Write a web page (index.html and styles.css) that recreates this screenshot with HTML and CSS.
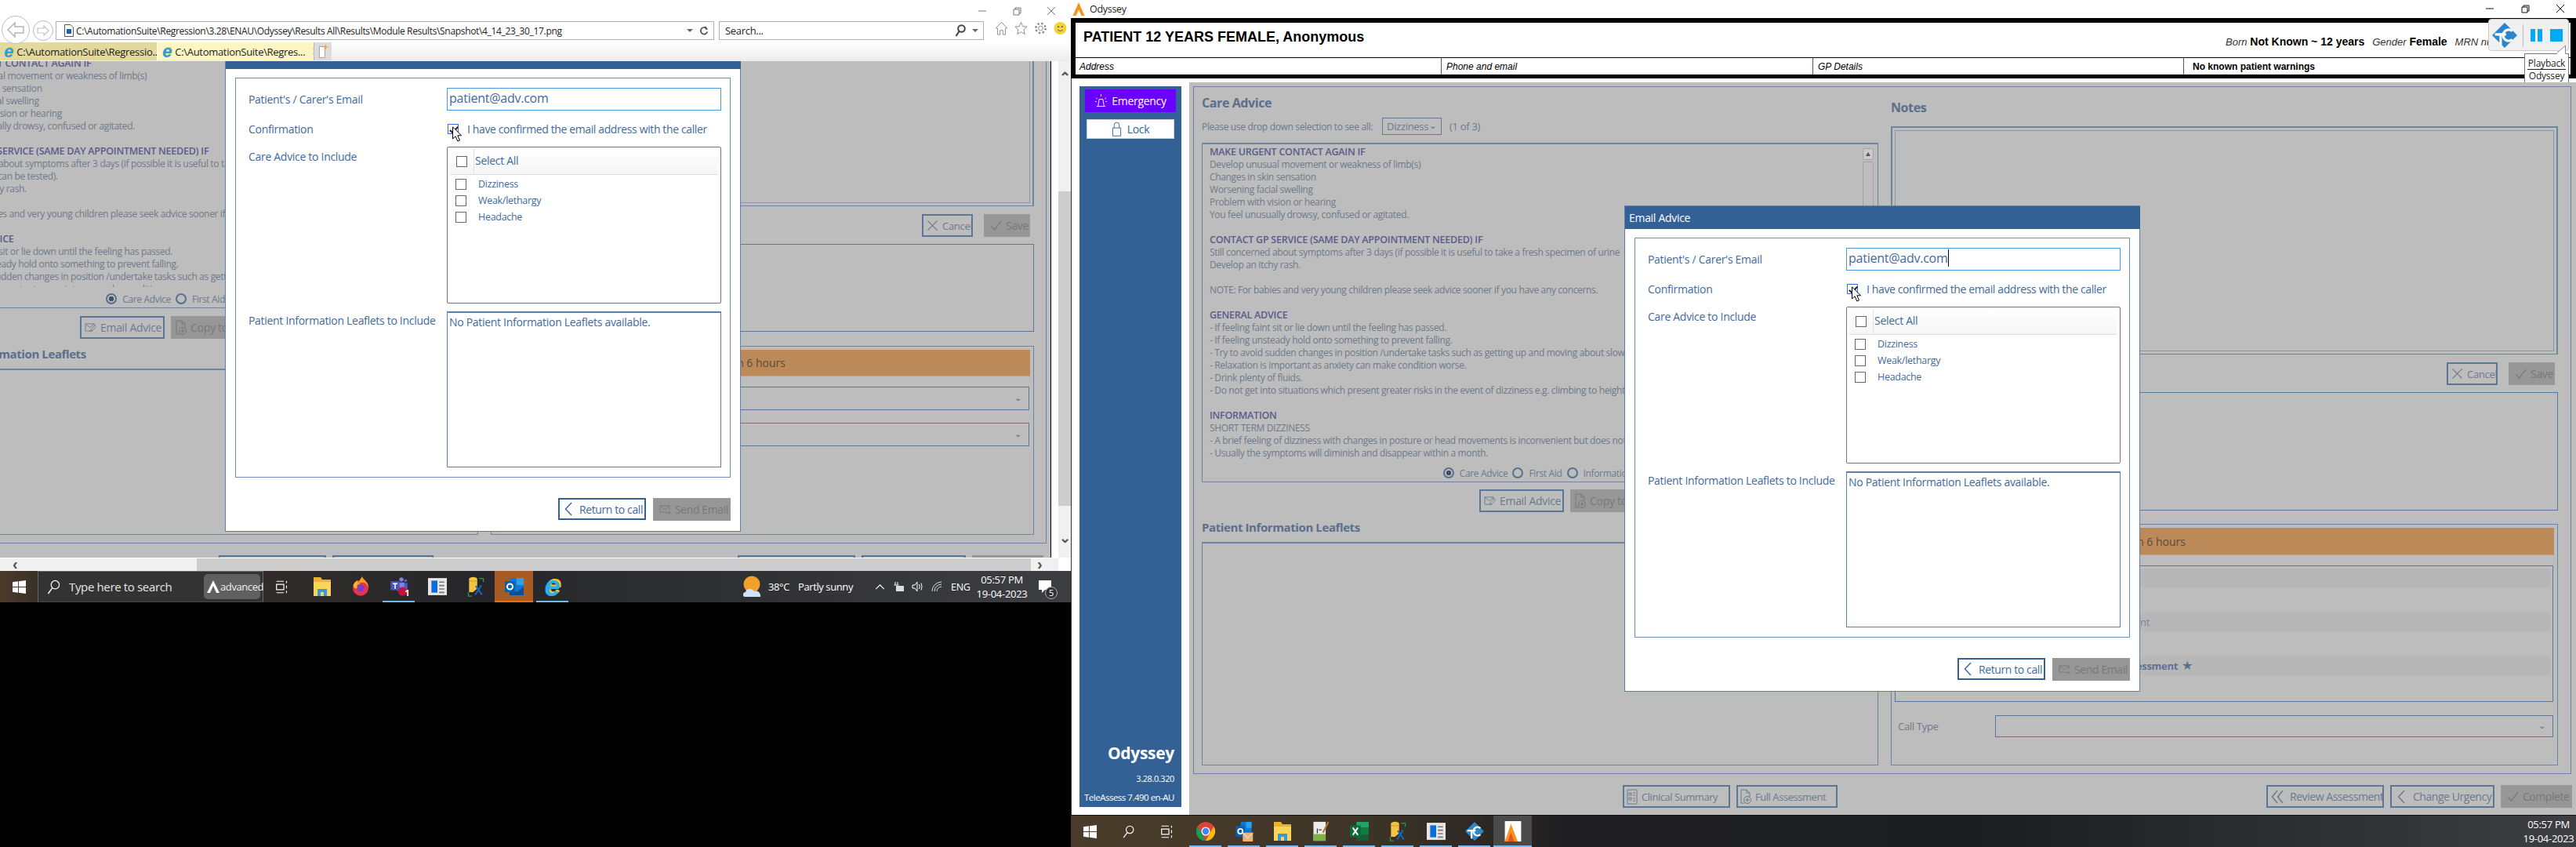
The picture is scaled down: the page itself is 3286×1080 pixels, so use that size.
FILE: index.html
```html
<!DOCTYPE html>
<html lang="en">
<head>
<meta charset="utf-8">
<title>Odyssey</title>
<link rel="stylesheet" href="styles.css">
</head>
<body>
<svg class="defs" xmlns="http://www.w3.org/2000/svg">
  <symbol id="i-win" viewBox="0 0 18 18"><path fill="#fff" d="M0 2.5 7.5 1.4V8.5H0zM8.5 1.3 18 0V8.500H8.500zM0 9.500H7.500V16.600L0 15.500zM8.500 9.500H18V18L8.500 16.700z"/></symbol>
  <symbol id="i-glass" viewBox="0 0 18 20"><circle cx="11" cy="7" r="5.500" fill="none" stroke="#fff" stroke-width="1.300"/><path d="M7 11.500 1.500 19" stroke="#fff" stroke-width="1.500"/></symbol>
  <symbol id="i-view" viewBox="0 0 18 20"><path fill="none" stroke="#fff" stroke-width="1.400" d="M1 1.500H12M1 18.500H12M1 6H12V14H1zM16 1V4M16 7.500V12M16 15.500V19"/></symbol>
  <symbol id="i-folder" viewBox="0 0 24 26"><path fill="#eeb32d" d="M1 1H10L12 4H23V25H1z"/><path fill="#fbd45a" d="M1 7H23V25H1z"/><path fill="#3a96dd" d="M6 16H18V25H14V20H10V25H6z"/></symbol>
  <symbol id="i-fox" viewBox="0 0 24 30"><circle cx="12" cy="17" r="11.500" fill="#e5344f"/><path fill="#ff9a1f" d="M14 0C17 6 24 8 23.500 17 22 12 19 9 15 9 12 9 9 10 8 12 8 7 12 5 14 0z"/><circle cx="12" cy="17" r="5.500" fill="#7b3fc4"/><path fill="#ffb224" d="M1 13C3 8 6 6 8 6 7 9 9 10 12 11 8 11 6 13 7 17 4 19 2 17 1 13z"/></symbol>
  <symbol id="i-teams" viewBox="0 0 28 34"><circle cx="18" cy="5" r="3.500" fill="#7b83eb"/><circle cx="25" cy="7" r="2.500" fill="#5059c9"/><path fill="#7b83eb" d="M11 10H23V24H11z"/><path fill="#5059c9" d="M23 11H28V22H23z"/><path fill="#4b53bc" d="M0 8H15V23H0z"/><path fill="#fff" d="M3.500 11H11.500V13H8.500V20.500H6.500V13H3.500z"/><circle cx="20" cy="25" r="7.500" fill="#c4123a"/></symbol>
  <symbol id="i-bar" viewBox="0 0 22 22"><path fill="#e6e6e6" d="M0 1H22V21H0z"/><path fill="#0a6cd6" d="M4 4H11V18H4z"/><path fill="#777" d="M13 5H19V6.500H13zM13 9H19V10.500H13zM13 13H19V14.500H13zM13 17H19V18.500H13z"/></symbol>
  <symbol id="i-paint" viewBox="0 0 24 30"><path fill="#f4c542" d="M2 4C2 0 14 0 14 4V18L8 23H2z"/><path fill="#d9a21f" d="M2 4C2 7 14 7 14 4V6C14 8 2 8 2 6z"/><path fill="none" stroke="#2b9a3f" stroke-width="1.500" d="M17 3H23V8M1 23V29H6"/><path stroke="#0f6cc4" stroke-width="2.200" d="M11 27 20 13M12 14 21 27"/></symbol>
  <symbol id="i-out" viewBox="0 0 24 26"><path fill="#0f78d4" d="M6 2H24V20H6z"/><path fill="#2da2ea" d="M15 2H24V11H15z"/><path fill="#0a4f99" d="M6 13 15 20 24 13V24H6z"/><path fill="#0c5fae" d="M0 6H13V20H0z"/><circle cx="6.500" cy="13" r="3.500" fill="none" stroke="#fff" stroke-width="2"/></symbol>
  <symbol id="i-chrome" viewBox="0 0 24 24"><circle cx="12" cy="12" r="12" fill="#db4437"/><path fill="#0f9d58" d="M12 24A12 12 0 0 1 1.600 6L7 15l5 9z"/><path fill="#fbbc05" d="M12 24 18 13 22.400 6A12 12 0 0 1 12 24z"/><circle cx="12" cy="12" r="5.500" fill="#fff"/><circle cx="12" cy="12" r="4.200" fill="#4285f4"/></symbol>
  <symbol id="i-outm" viewBox="0 0 26 30"><path fill="#0f78d4" d="M8 1H24V20H8z"/><path fill="#2da2ea" d="M16 1H24V10H16z"/><path fill="#0c5fae" d="M1 7H14V23H1z"/><circle cx="7.500" cy="15" r="3.500" fill="none" stroke="#fff" stroke-width="2"/><path fill="#e8b27a" d="M11 17H26V30H11z"/><path fill="none" stroke="#fff" d="M11 17 18.500 25 26 17"/></symbol>
  <symbol id="i-note" viewBox="0 0 24 30"><path fill="#ededed" d="M1 1H19V29H1z"/><path fill="#7cb342" d="M1 19H19V29H1z"/><path fill="#333" d="M6 11H7.500V18H6zM9 12H13V13.500H9z"/><path stroke="#b5792e" stroke-width="2.500" d="M23 1 15 17"/></symbol>
  <symbol id="i-xl" viewBox="0 0 26 28"><path fill="#21a366" d="M9 1H26V9H9z"/><path fill="#107c41" d="M9 9H26V19H9z"/><path fill="#185c37" d="M9 19H26V27H9z"/><path fill="#0e6b38" d="M0 6H15V22H0z"/><path stroke="#fff" stroke-width="2" d="M4 9 11 19M11 9 4 19"/></symbol>
  <symbol id="i-tc" viewBox="0 0 36 36"><path fill="#2b87c9" d="M18 0 36 18 18 36 0 18z"/><path fill="#fff" d="M4 15H20V18.500H14V32H10.500V18.500H4z"/><path fill="none" stroke="#fff" stroke-width="3.500" d="M29 12A8 8 0 1 0 29 24"/></symbol>
  <symbol id="i-ody" viewBox="0 0 24 30"><path fill="#fff" d="M0 0H24V30H0z"/><path fill="#f7941d" d="M9 4 19 30H14L9 16 4 30H0z"/><path fill="#e8541c" d="M9 16 14 30H4z"/></symbol>
  <symbol id="i-check" viewBox="0 0 16 16"><path fill="none" stroke="currentColor" stroke-width="1.300" d="M1.500 9 6 14 15 2"/></symbol>
  <symbol id="i-x" viewBox="0 0 16 16"><path fill="none" stroke="currentColor" stroke-width="1.300" d="M1.500 1.500 14.500 14.500M14.500 1.500 1.500 14.500"/></symbol>
  <symbol id="i-prev" viewBox="0 0 10 18"><path fill="none" stroke="currentColor" stroke-width="1.500" d="M9 1 1.500 9 9 17"/></symbol>
  <symbol id="i-prev2" viewBox="0 0 16 18"><path fill="none" stroke="currentColor" stroke-width="1.500" d="M8 1 1.500 9 8 17M15 1 8.500 9 15 17"/></symbol>
  <symbol id="i-mail" viewBox="0 0 16 14"><path fill="none" stroke="currentColor" d="M11 11H1V2H14V7M1 2 7.500 7.500 14 2M10 11.500H15M13 9.500 15 11.500 13 13.500"/></symbol>
  <symbol id="i-mailp" viewBox="0 0 16 14"><path fill="none" stroke="currentColor" d="M11 12H1V2H13V5M1 2 7 7 13 2M8 12 9 9 14 4 16 6 11 11z"/></symbol>
  <symbol id="i-doc" viewBox="0 0 14 20"><path fill="none" stroke="currentColor" d="M1 1H8L12 5V10M1 1V18H5M8 1V5H12"/><circle cx="9" cy="14" r="4.500" fill="none" stroke="currentColor"/><path stroke="currentColor" d="M9 11.500V16.500M6.500 14H11.500"/></symbol>
  <symbol id="i-list" viewBox="0 0 14 20"><path fill="none" stroke="currentColor" d="M1 1H13V19H1zM3 5H6V8H3zM3 11H6V14H3zM8 5H11M8 8H11M8 12H11M8 15H11"/></symbol>
  <symbol id="i-cur" viewBox="0 0 13 20"><path fill="#fff" stroke="#000" d="M.500.800V16L4 12.800 6.800 19 9.500 17.900 6.800 11.800H11.500z"/></symbol>
</svg>

<div class="desktop">
  <section class="ie">
    <div class="ie-top">
      <div class="ie-ctrl">
        <svg class="wc" viewBox="0 0 12 12"><path d="M1 6H11" stroke="#777"/></svg>
        <svg class="wc" viewBox="0 0 12 12"><path fill="none" stroke="#777" d="M2 4H9V11H2zM4 4V2H11V9H9"/></svg>
        <svg class="wc" viewBox="0 0 12 12"><path stroke="#777" d="M1 1 11 11M11 1 1 11"/></svg>
      </div>
      <div class="ie-nav">
        <svg class="nav-back" viewBox="0 0 38 36"><circle cx="19" cy="18" r="17.500" fill="#fff" stroke="#bbb"/><path fill="none" stroke="#b5b5b5" stroke-width="1.500" d="M18 9 9 18 18 27V22H29V14H18z"/></svg>
        <svg class="nav-fwd" viewBox="0 0 26 26"><circle cx="13" cy="13" r="12.500" fill="#fff" stroke="#bbb"/><path fill="none" stroke="#c4c4c4" stroke-width="1.200" d="M14 7 20 13 14 19V16H6V10H14z"/></svg>
        <div class="addr">
          <svg class="addr-ic" viewBox="0 0 12 16"><path fill="#fff" stroke="#555" d="M.500.500H8L11.500 4V15.500H.500z"/><path fill="#1560b0" d="M3 6H9V12H3z"/></svg>
          <span class="addr-t">C:\AutomationSuite\Regression\3.28\ENAU\Odyssey\Results All\Results\Module Results\Snapshot\4_14_23_30_17.png</span>
          <span class="addr-tools">
            <svg class="caret" viewBox="0 0 8 4"><path fill="#666" d="M0 0H8L4 4z"/></svg>
            <svg class="refresh" viewBox="0 0 14 16"><path fill="none" stroke="#555" stroke-width="2" d="M10.500 4A5 5 0 1 0 12 9"/><path fill="#555" d="M9 0V6H13z"/></svg>
          </span>
        </div>
        <div class="srch">
          <span class="srch-t">Search...</span>
          <span class="addr-tools">
            <svg class="srch-ic" viewBox="0 0 14 16"><circle cx="8.500" cy="5.500" r="4.300" fill="none" stroke="#444" stroke-width="2"/><path stroke="#444" stroke-width="2.200" d="M5.500 9 1.500 15"/></svg>
            <svg class="caret" viewBox="0 0 8 4"><path fill="#666" d="M0 0H8L4 4z"/></svg>
          </span>
        </div>
        <div class="ie-tools">
          <svg class="tool" viewBox="0 0 18 20"><path fill="none" stroke="#888" d="M1 10 9 1.500 17 10H14.500V19H11V13H7V19H3.500V10z"/></svg>
          <svg class="tool" viewBox="0 0 18 18"><path fill="none" stroke="#888" d="M9 1 11.400 6.500 17 7 12.800 11 14 17 9 14 4 17 5.200 11 1 7 6.600 6.500z"/></svg>
          <svg class="tool" viewBox="0 0 18 18"><circle cx="9" cy="9" r="3" fill="none" stroke="#888"/><circle cx="9" cy="9" r="6.500" fill="none" stroke="#888" stroke-width="2.500" stroke-dasharray="2.500 2.600"/></svg>
          <svg class="tool" viewBox="0 0 18 18"><circle cx="9" cy="9" r="8.500" fill="#f5d23c"/><circle cx="6.500" cy="7" r="1.100" fill="#555"/><circle cx="11.500" cy="7" r="1.100" fill="#555"/><path fill="none" stroke="#555" d="M5.500 11.500Q9 14 12.500 11.500"/></svg>
        </div>
      </div>
      <div class="ie-tabs">
        <div class="tab tab-a"><span class="ie-e">e</span><span class="tab-t">C:\AutomationSuite\Regressio...</span></div>
        <div class="tab tab-b"><span class="ie-e">e</span><span class="tab-t">C:\AutomationSuite\Regres...</span><svg class="tab-x" viewBox="0 0 16 16"><use href="#i-x"/></svg></div>
        <div class="tab-new"><svg viewBox="0 0 14 20"><path fill="#fff" stroke="#999" d="M1.500 3.500H9V18.500H1.500z"/><path fill="#f6a623" d="M10 0 11 3 14 4 11 5 10 8 9 5 6 4 9 3z"/></svg></div>
      </div>
    </div>

    <div class="ie-mid">
      <div class="view">
        <div class="stage stage-l">
          <div class="panel">
            <div class="col">
              <div class="col-head"></div>
              <div class="tbox">
                <div class="adv">
                  <div class="adv-h">MAKE URGENT CONTACT AGAIN IF</div>
                  <div>Develop unusual movement or weakness of limb(s)</div>
                  <div>Changes in skin sensation</div>
                  <div>Worsening facial swelling</div>
                  <div>Problem with vision or hearing</div>
                  <div>You feel unusually drowsy, confused or agitated.</div>
                  <div class="adv-g"></div>
                  <div class="adv-h">CONTACT GP SERVICE (SAME DAY APPOINTMENT NEEDED) IF</div>
                  <div>Still concerned about symptoms after 3 days (if possible it is useful to take</div>
                  <div>urine so that it can be tested).</div>
                  <div>Develop an itchy rash.</div>
                  <div class="adv-g"></div>
                  <div>NOTE: For babies and very young children please seek advice sooner if</div>
                  <div class="adv-g"></div>
                  <div class="adv-h">GENERAL ADVICE</div>
                  <div>- If feeling faint sit or lie down until the feeling has passed.</div>
                  <div>- If feeling unsteady hold onto something to prevent falling.</div>
                  <div>- Try to avoid sudden changes in position /undertake tasks such as getting</div>
                  <div>- Relaxation is important as anxiety can make condition worse.</div>
                </div>
                <div class="radios">
                  <span class="rad rad-on"></span><span class="rad-l">Care Advice</span>
                  <span class="rad"></span><span class="rad-l">First Aid</span>
                  <span class="rad"></span><span class="rad-l">Information</span>
                </div>
              </div>
              <div class="btn-row">
                <button class="btn btn-email"><svg class="b-ic"><use href="#i-mailp"/></svg>Email Advice</button>
                <button class="btn btn-off btn-copy"><svg class="b-doc"><use href="#i-doc"/></svg>Copy to clipboard</button>
              </div>
              <div class="h-leaf">Patient Information Leaflets</div>
              <div class="leaf-box"></div>
            </div>
            <div class="col">
              <div class="notes-head"></div>
              <div class="notes"><div class="notes-in"></div></div>
              <div class="save-row">
                <button class="btn btn-cancel"><svg class="b-ic2"><use href="#i-x"/></svg>Cancel</button>
                <button class="btn btn-off btn-save"><svg class="b-ic2"><use href="#i-check"/></svg>Save</button>
              </div>
              <div class="box2"></div>
              <div class="group">
                <div class="orange"><span>Contact GP within 6 hours</span></div>
                <div class="sel sel-1"><i class="chev">⌄</i></div>
                <div class="sel sel-2"><i class="chev">⌄</i></div>
              </div>
            </div>
          </div>
          <div class="foot">
            <span class="btn btn-clin"></span>
            <span class="btn btn-full"></span>
            <span class="btn btn-rev"></span>
            <span class="btn btn-chg"></span>
            <span class="btn btn-off btn-cmp"></span>
          </div>
        </div>

        <div class="dialog dialog-l">
          <div class="d-head"></div>
          <div class="d-box">
            <div class="f f-mail"><label class="f-l">Patient's / Carer's Email</label><div class="d-input">patient@adv.com</div></div>
            <div class="f f-conf"><label class="f-l">Confirmation</label><div class="conf"><span class="cb cb-on"></span><span>I have confirmed the email address with the caller</span></div><svg class="cursor"><use href="#i-cur"/></svg></div>
            <div class="f f-list"><label class="f-l">Care Advice to Include</label>
              <div class="lbox">
                <div class="l-head"><span class="cb cb-big"></span><span class="l-all">Select All</span></div>
                <div class="l-row"><span class="cb"></span>Dizziness</div>
                <div class="l-row"><span class="cb"></span>Weak/lethargy</div>
                <div class="l-row"><span class="cb"></span>Headache</div>
              </div>
            </div>
            <div class="f f-leaf"><label class="f-l">Patient Information Leaflets to Include</label><div class="d-leaf">No Patient Information Leaflets available.</div></div>
          </div>
          <div class="d-foot">
            <button class="btn d-ret"><svg class="d-prev"><use href="#i-prev"/></svg>Return to call</button>
            <button class="btn btn-off d-send"><svg class="b-ic"><use href="#i-mail"/></svg>Send Email</button>
          </div>
        </div>
      </div>
      <div class="ie-edge"></div>
      <div class="vscroll"><span class="vs-a">⌃</span><div class="vs-t"></div><span class="vs-b">⌄</span></div>
    </div>

    <div class="hscroll"><span class="hs-a">‹</span><div class="hs-t"></div><span class="hs-b">›</span></div>

    <div class="taskbar tb-l">
      <span class="t-start"><svg class="t-i18"><use href="#i-win"/></svg></span>
      <div class="t-search">
        <svg class="t-glass"><use href="#i-glass"/></svg>
        <span class="t-stext">Type here to search</span>
        <span class="t-pill"><svg class="t-a" viewBox="0 0 16 16"><path fill="#fff" d="M8 0 16 16H12L8 7 4 16H0z"/></svg>advanced</span>
      </div>
      <span class="t-tile t-view"><svg class="t-i18"><use href="#i-view"/></svg></span>
      <span class="t-tile"><svg class="t-i24"><use href="#i-folder"/></svg></span>
      <span class="t-tile"><svg class="t-i24"><use href="#i-fox"/></svg></span>
      <span class="t-tile t-on t-teams"><svg class="t-i24"><use href="#i-teams"/></svg><b class="t-badge">1</b></span>
      <span class="t-tile"><svg class="t-i24"><use href="#i-bar"/></svg></span>
      <span class="t-tile"><svg class="t-i24"><use href="#i-paint"/></svg></span>
      <span class="t-tile t-hot"><svg class="t-i24"><use href="#i-out"/></svg></span>
      <span class="t-tile t-on"><span class="ie-e ie-big">e</span></span>
      <div class="t-tray">
        <svg class="t-sun" viewBox="0 0 24 28"><circle cx="11" cy="11" r="10.500" fill="#f2a02c"/><path fill="#cfe4fa" d="M2 27C-1 27-1 21 3 21 4 16 12 16 14 20 18 18 23 22 22 27z"/></svg>
        <span class="t-temp">38°C</span><span class="t-wx">Partly sunny</span>
        <svg class="t-ch" viewBox="0 0 14 8"><path fill="none" stroke="#fff" stroke-width="1.300" d="M1 7 7 1 13 7"/></svg>
        <svg class="t-sys t-bat" viewBox="0 0 16 14"><path fill="none" stroke="#fff" d="M3 1V5M6 1V5M1.500 5H7.500"/><path fill="#ddd" d="M4 6H14V13H4z"/></svg>
        <svg class="t-sys t-spk" viewBox="0 0 16 14"><path fill="none" stroke="#fff" d="M1 5H4L7 1V13L4 9H1zM9.500 4Q11 7 9.500 10M12 2.500Q14 7 12 11.500"/></svg>
        <svg class="t-sys t-wifi" viewBox="0 0 16 14"><path fill="none" stroke="#ddd" d="M1 13A12 12 0 0 1 13 1M4 13A9 9 0 0 1 13 4M7 13A6 6 0 0 1 13 7"/></svg>
        <span class="t-eng">ENG</span>
        <div class="t-clock"><span>05:57 PM</span><span>19-04-2023</span></div>
        <span class="t-notif"><svg viewBox="0 0 16 16"><path fill="#fff" d="M0 0H16V12H8L4 16V12H0z"/></svg><b class="t-count">5</b></span>
      </div>
    </div>
  </section>

  <section class="ody">
    <div class="o-title">
      <svg class="o-logo" viewBox="0 0 16 18"><path fill="#f7941d" d="M8 0 16 18H11.500L8 10 4.500 18H0z"/></svg>
      <span>Odyssey</span>
      <div class="o-ctrl">
        <svg class="wc" viewBox="0 0 12 12"><path d="M1 6H11" stroke="#111"/></svg>
        <svg class="wc" viewBox="0 0 12 12"><path fill="none" stroke="#111" d="M2 4H9V11H2zM4 4V2H11V9H9"/></svg>
        <svg class="wc" viewBox="0 0 12 12"><path stroke="#111" d="M1 1 11 11M11 1 1 11"/></svg>
      </div>
    </div>
    <div class="pt">
      <div class="pt-r1">
        <div class="pt-name">PATIENT 12 YEARS FEMALE, Anonymous</div>
        <div class="pt-meta"><i>Born</i> <b>Not Known ~ 12 years</b> <i class="m-g">Gender</i> <b>Female</b> <i class="m-g">MRN nu</i></div>
      </div>
      <div class="pt-r2">
        <div class="pc pc-a"><i>Address</i></div>
        <div class="pc pc-b"><i>Phone and email</i></div>
        <div class="pc pc-c"><i>GP Details</i></div>
        <div class="pc pc-d"><b>No known patient warnings</b></div>
      </div>
    </div>
    <div class="widget">
      <svg class="w-tc"><use href="#i-tc"/></svg>
      <span class="w-sep"></span>
      <span class="w-pause"><i></i><i></i></span>
      <span class="w-stop"></span>
    </div>
    <div class="tip"><span>Playback</span><span class="tip-b">Odyssey</span></div>

    <div class="o-body">
      <aside class="side">
        <button class="s-em"><svg class="s-bell" viewBox="0 0 18 20"><path fill="none" stroke="#fff" d="M5 17 6.500 8H11.500L13 17M3 17.500H15M9 1V4M2 6 4 7.500M16 6 14 7.500M1 11H3M15 11H17"/></svg>Emergency</button>
        <button class="s-lock"><svg class="s-pad" viewBox="0 0 14 20"><path fill="none" stroke="#336195" d="M1.500 8.500H12.500V19.500H1.500zM3.500 8.500V4.500A3.500 3.500 0 0 1 10.500 4.500V8.500"/></svg>Lock</button>
        <div class="s-brand">Odyssey</div>
        <div class="s-ver">3.28.0.320</div>
        <div class="s-tele">TeleAssess 7.490 en-AU</div>
      </aside>
      <main class="view view-r">
        <div class="stage stage-r">
          <div class="panel">
            <div class="col">
              <div class="col-head">
                <div class="h-title">Care Advice</div>
                <div class="pick"><span class="pick-t">Please use drop down selection to see all:</span><span class="pick-s">Dizziness<i class="chev">⌄</i></span><span>(1 of 3)</span></div>
              </div>
              <div class="tbox">
                <div class="adv">
                  <div class="adv-h">MAKE URGENT CONTACT AGAIN IF</div>
                  <div>Develop unusual movement or weakness of limb(s)</div>
                  <div>Changes in skin sensation</div>
                  <div>Worsening facial swelling</div>
                  <div>Problem with vision or hearing</div>
                  <div>You feel unusually drowsy, confused or agitated.</div>
                  <div class="adv-g"></div>
                  <div class="adv-h">CONTACT GP SERVICE (SAME DAY APPOINTMENT NEEDED) IF</div>
                  <div>Still concerned about symptoms after 3 days (if possible it is useful to take a fresh specimen of urine</div>
                  <div>Develop an itchy rash.</div>
                  <div class="adv-g"></div>
                  <div>NOTE: For babies and very young children please seek advice sooner if you have any concerns.</div>
                  <div class="adv-g"></div>
                  <div class="adv-h">GENERAL ADVICE</div>
                  <div>- If feeling faint sit or lie down until the feeling has passed.</div>
                  <div>- If feeling unsteady hold onto something to prevent falling.</div>
                  <div>- Try to avoid sudden changes in position /undertake tasks such as getting up and moving about slowly.</div>
                  <div>- Relaxation is important as anxiety can make condition worse.</div>
                  <div>- Drink plenty of fluids.</div>
                  <div>- Do not get into situations which present greater risks in the event of dizziness e.g. climbing to heights.</div>
                  <div class="adv-g"></div>
                  <div class="adv-h">INFORMATION</div>
                  <div>SHORT TERM DIZZINESS</div>
                  <div>- A brief feeling of dizziness with changes in posture or head movements is inconvenient but does not</div>
                  <div>- Usually the symptoms will diminish and disappear within a month.</div>
                </div>
                <div class="radios">
                  <span class="rad rad-on"></span><span class="rad-l">Care Advice</span>
                  <span class="rad"></span><span class="rad-l">First Aid</span>
                  <span class="rad"></span><span class="rad-l">Information</span>
                </div>
                <div class="tb-scroll"><span class="tb-up"></span><span class="tb-track"></span></div>
              </div>
              <div class="btn-row">
                <button class="btn btn-email"><svg class="b-ic"><use href="#i-mailp"/></svg>Email Advice</button>
                <button class="btn btn-off btn-copy"><svg class="b-doc"><use href="#i-doc"/></svg>Copy to clipboard</button>
              </div>
              <div class="h-leaf">Patient Information Leaflets</div>
              <div class="leaf-box"></div>
            </div>
            <div class="col">
              <div class="notes-head"><div class="h-title">Notes</div></div>
              <div class="notes"><div class="notes-in"></div></div>
              <div class="save-row">
                <button class="btn btn-cancel"><svg class="b-ic2"><use href="#i-x"/></svg>Cancel</button>
                <button class="btn btn-off btn-save"><svg class="b-ic2"><use href="#i-check"/></svg>Save</button>
              </div>
              <div class="box2"></div>
              <div class="group">
                <div class="orange"><span>Contact GP within 6 hours</span></div>
                <div class="rlist">
                  <div class="rl-row"></div>
                  <div class="rl-row"><span class="rl-t2">Patient</span></div>
                  <div class="rl-row"><b class="rl-t3">Full Assessment</b><span class="rl-star">★</span></div>
                </div>
                <div class="calltype"><span class="ct-l">Call Type</span><div class="sel ct-s"><i class="chev">⌄</i></div></div>
              </div>
            </div>
          </div>
          <div class="foot">
            <button class="btn btn-clin"><svg class="b-doc"><use href="#i-list"/></svg>Clinical Summary</button>
            <button class="btn btn-full"><svg class="b-doc"><use href="#i-doc"/></svg>Full Assessment</button>
            <button class="btn btn-rev"><svg class="b-pr2"><use href="#i-prev2"/></svg>Review Assessment</button>
            <button class="btn btn-chg"><svg class="b-pr"><use href="#i-prev"/></svg>Change Urgency</button>
            <button class="btn btn-off btn-cmp"><svg class="b-ic2"><use href="#i-check"/></svg>Complete</button>
          </div>
        </div>

        <div class="dialog dialog-r">
          <div class="d-head">Email Advice</div>
          <div class="d-box">
            <div class="f f-mail"><label class="f-l">Patient's / Carer's Email</label><div class="d-input">patient@adv.com<span class="caret-t"></span></div></div>
            <div class="f f-conf"><label class="f-l">Confirmation</label><div class="conf"><span class="cb cb-on"></span><span>I have confirmed the email address with the caller</span></div><svg class="cursor"><use href="#i-cur"/></svg></div>
            <div class="f f-list"><label class="f-l">Care Advice to Include</label>
              <div class="lbox">
                <div class="l-head"><span class="cb cb-big"></span><span class="l-all">Select All</span></div>
                <div class="l-row"><span class="cb"></span>Dizziness</div>
                <div class="l-row"><span class="cb"></span>Weak/lethargy</div>
                <div class="l-row"><span class="cb"></span>Headache</div>
              </div>
            </div>
            <div class="f f-leaf"><label class="f-l">Patient Information Leaflets to Include</label><div class="d-leaf">No Patient Information Leaflets available.</div></div>
          </div>
          <div class="d-foot">
            <button class="btn d-ret"><svg class="d-prev"><use href="#i-prev"/></svg>Return to call</button>
            <button class="btn btn-off d-send"><svg class="b-ic"><use href="#i-mail"/></svg>Send Email</button>
          </div>
        </div>
      </main>
    </div>

    <div class="taskbar tb-r">
      <span class="r-tile r-first"><svg class="t-i18"><use href="#i-win"/></svg></span>
      <span class="r-tile"><svg class="t-i18"><use href="#i-glass"/></svg></span>
      <span class="r-tile r-view"><svg class="t-i18"><use href="#i-view"/></svg></span>
      <span class="r-tile r-on"><svg class="t-i24"><use href="#i-chrome"/></svg></span>
      <span class="r-tile r-on"><svg class="t-i24"><use href="#i-outm"/></svg></span>
      <span class="r-tile r-on"><svg class="t-i24"><use href="#i-folder"/></svg></span>
      <span class="r-tile r-on"><svg class="t-i24"><use href="#i-note"/></svg></span>
      <span class="r-tile r-on"><svg class="t-i24"><use href="#i-xl"/></svg></span>
      <span class="r-tile r-on"><svg class="t-i24"><use href="#i-paint"/></svg></span>
      <span class="r-tile r-on"><svg class="t-i24"><use href="#i-bar"/></svg></span>
      <span class="r-tile r-on"><svg class="t-i24"><use href="#i-tc"/></svg></span>
      <span class="r-tile r-on r-act"><svg class="t-i24"><use href="#i-ody"/></svg></span>
      <div class="t-clock r-clock"><span>05:57 PM</span><span>19-04-2023</span></div>
    </div>
  </section>
</div>
</body>
</html>
```

FILE: styles.css
```css
* { box-sizing: border-box; }
html, body { margin: 0; padding: 0; background: #000; }
body { width: 3286px; height: 1080px; overflow: hidden; font-family: "Open Sans", "Liberation Sans", sans-serif; font-size: 12px; letter-spacing: -0.3px; color: #6b7a8e; }
.defs { display: none; }
button { font: inherit; letter-spacing: inherit; margin: 0; padding: 0; }
svg { display: block; flex: none; }
.desktop { display: flex; align-items: flex-start; width: 3286px; height: 1080px; }

/* browser window */
.ie { width: 1366px; height: 768px; display: flex; flex-direction: column; background: #fff; flex: none; }
.ie-top { height: 78px; display: flex; flex-direction: column; background: #fff; color: #222; flex: none; }
.ie-ctrl { height: 27px; display: flex; justify-content: flex-end; gap: 32px; padding: 8px 19px 0 0; }
.wc { width: 12px; height: 12px; }
.ie-nav { height: 27px; display: flex; align-items: flex-start; position: relative; }
.nav-back { width: 38px; height: 36px; margin: -7px 0 0 1px; position: relative; z-index: 2; }
.nav-fwd { width: 26px; height: 26px; margin: -1px 0 0 3px; }
.addr, .srch { height: 24px; display: flex; align-items: center; border: 1px solid #b0b0b0; background: #fff; }
.addr { width: 840px; margin-left: 3px; padding-left: 10px; }
.addr-ic { width: 12px; height: 16px; margin-right: 3px; }
.addr-t { font-size: 12px; letter-spacing: -0.33px; white-space: nowrap; }
.addr-tools { margin-left: auto; display: flex; align-items: center; gap: 8px; padding-right: 6px; }
.caret { width: 8px; height: 4px; }
.refresh { width: 12px; height: 15px; }
.srch { width: 338px; margin-left: 6px; padding-left: 7px; }
.srch-t { font-size: 13px; }
.srch-ic { width: 14px; height: 16px; }
.ie-tools { display: flex; gap: 8px; margin-left: 14px; }
.tool { width: 17px; height: 18px; }
.ie-tabs { height: 24px; display: flex; background: linear-gradient(#fff, #ececec); }
.tab { height: 23px; width: 200px; display: flex; align-items: center; padding-left: 5px; font-size: 13px; letter-spacing: -0.3px; white-space: nowrap; }
.tab-a { background: #e3d99c; }
.tab-b { background: #fdf6c3; border-left: 1px solid #fff; padding-left: 6px; }
.ie-e { font: italic 700 22px/20px "Liberation Sans", sans-serif; color: #2a9fe0; width: 17px; margin-right: 4px; letter-spacing: 0; text-shadow: 1px -1px 0 #e8c33c; }
.ie-big { font-size: 36px; line-height: 30px; width: auto; margin: 0; color: #28b0ee; text-shadow: 2px -2px 0 #f0c63a; }
.tab-x { width: 9px; height: 9px; margin-left: 9px; color: #999; }
.tab-new { width: 23px; height: 23px; background: #dcdcdc; padding: 2px 5px; border-left: 1px solid #bbb; }
.tab-new svg { width: 13px; height: 19px; }

.ie-mid { height: 633px; display: flex; flex: none; }
.view { position: relative; overflow: hidden; background: #bdbdbd; }
.ie-mid .view { width: 1340px; height: 633px; flex: none; }
.ie-edge { width: 10px; border-left: 1px solid #000; background: #fff; flex: none; }
.vscroll { width: 16px; display: flex; flex-direction: column; align-items: center; background: #f0f0f0; color: #555; }
.vs-a, .vs-b { font: 700 18px/12px "Liberation Sans", sans-serif; height: 14px; letter-spacing: 0; }
.vs-a { margin-top: 15px; }
.vs-t { width: 16px; height: 401px; margin-top: 137px; background: #cdcdcd; }
.vs-b { margin-top: 35px; }
.hscroll { height: 17px; margin-top: 0; border-top: 1px solid #fff; width: 1350px; display: flex; background: #f0f0f0; color: #555; flex: none; }
.hs-a, .hs-b { font: 700 20px/14px "Liberation Sans", sans-serif; letter-spacing: 0; }
.hs-a { width: 251px; padding-left: 16px; }
.hs-t { width: 1064px; background: #cdcdcd; }
.hs-b { padding-left: 8px; }

/* shared background content */
.stage { display: flex; flex-direction: column; }
.panel { display: grid; border: 1px solid #6d84a2; padding: 0 0 10px 10px; column-gap: 16px; flex: none; }
.col { display: flex; flex-direction: column; min-width: 0; }
.stage-r { width: 1769px; padding-left: 5px; padding-top: 5px; }
.stage-r .panel { width: 1758px; height: 877px; grid-template-columns: 863px 851px; }
.stage-l { width: 1443px; margin-left: -103px; margin-top: -81px; }
.stage-l .panel { width: 1438px; height: 696px; grid-template-columns: 702px 693px; }
.col-head { height: 71px; padding-top: 10px; }
.notes-head { height: 50px; padding-top: 16px; }
.h-title, .h-leaf { font-weight: 700; line-height: 20px; color: #5a6f8c; letter-spacing: -0.4px; }
.h-title { font-size: 16px; }
.h-leaf { font-size: 15px; }
.pick { display: flex; align-items: center; gap: 10px; height: 22px; margin-top: 9px; font-size: 13px; letter-spacing: -0.3px; white-space: nowrap; }
.pick-t { width: 220px; font-size: 12px; letter-spacing: -0.34px; }
.pick-s { width: 76px; height: 22px; border: 1px solid #5f7a9c; display: flex; align-items: center; justify-content: space-between; padding: 0 6px 0 5px; }
.chev { font-style: normal; font-size: 11px; line-height: 8px; height: 10px; color: #546a86; }
.tbox { position: relative; display: flex; flex-direction: column; border: 1px solid #6d84a2; border-top-width: 2px; padding: 2px 9px 0 9px; flex: none; }
.stage-r .tbox { height: 433px; }
.stage-l .tbox { height: 324px; }
.adv { flex: 1; min-height: 0; overflow: hidden; line-height: 16px; white-space: nowrap; margin-bottom: 4px; font-size: 12px; letter-spacing: -0.34px; color: #6d7a8b; }
.adv-h { font-weight: 600; font-size: 12.500px; letter-spacing: -0.25px; color: #5a5c8a; }
.adv-g { height: 16px; }
.radios { height: 22px; display: flex; align-items: center; justify-content: center; font-size: 12px; letter-spacing: -0.34px; flex: none; white-space: nowrap; }
.rad { width: 14px; height: 14px; border: 2px solid #55708f; border-radius: 50%; margin-right: 7px; display: block; }
.rad-on { background: radial-gradient(circle, #3f5068 0 3px, transparent 3.500px); }
.rad-l { margin-right: 6px; }
.tb-scroll { position: absolute; right: 5px; top: 5px; width: 14px; display: flex; flex-direction: column; gap: 2px; }
.tb-up { height: 15px; border: 1px solid #a3a3a3; border-radius: 2px; background: #c9c9c9; position: relative; }
.tb-up::after { content: ""; position: absolute; left: 3px; top: 4px; border: 3.500px solid transparent; border-top: 0; border-bottom: 5px solid #555; }
.tb-track { height: 360px; border: 1px solid #a3a3a3; border-radius: 2px; }
.btn-row { display: flex; gap: 8px; margin-top: 9px; height: 29px; flex: none; }
.stage-r .btn-row { padding-left: 354px; }
.stage-l .btn-row { padding-left: 194px; margin-top: 10px; }
.btn { height: 29px; border: 2px solid #5b7698; background: transparent; color: #6b7a8e; display: flex; align-items: center; gap: 5px; padding: 0 4px; font-size: 14px; white-space: nowrap; flex: none; }
.btn-off { background: #979797; border-color: #979797; color: #777; }
.btn-email { width: 108px; }
.btn-copy { width: 130px; }
.b-ic { width: 15px; height: 13px; color: currentColor; }
.b-ic2 { width: 15px; height: 15px; }
.b-doc { width: 14px; height: 20px; }
.b-pr { width: 10px; height: 18px; margin: 0 5px 0 3px; }
.b-pr2 { width: 16px; height: 18px; margin-right: 3px; }
.h-leaf { margin-top: 9px; margin-bottom: 9px; flex: none; }
.leaf-box { flex: 1; border: 1px solid #6d84a2; border-top-width: 2px; }
.notes { border: 2px solid #6d84a2; padding: 3px; flex: none; border-bottom-width: 1px; }
.notes-in { height: 100%; border: 1px solid #8d98a6; }
.stage-r .notes { height: 291px; }
.stage-l .notes { height: 215px; }
.save-row { display: flex; justify-content: flex-end; gap: 14px; margin-top: 10px; flex: none; }
.stage-r .save-row { padding-right: 4px; }
.stage-l .save-row { padding-right: 5px; }
.btn-cancel { width: 65px; font-size: 13px; }
.btn-save { width: 59px; font-size: 14px; padding-left: 6px; }
.box2 { border: 1px solid #5b7698; margin-top: 9px; flex: none; }
.stage-r .box2 { height: 151px; margin-bottom: 17px; }
.stage-l .box2 { height: 112px; margin-bottom: 18px; }
.group { flex: 1; border: 1px solid #6d84a2; padding: 4px 4px 0 4px; display: flex; flex-direction: column; }
.orange { background: #bc8a58; border-bottom: 1px solid #c6a27f; flex: none; font-size: 14px; letter-spacing: 0; color: #5b4a3a; display: flex; align-items: center; }
.orange span { display: block; width: 371px; text-align: right; white-space: nowrap; }
.stage-r .orange { height: 35px; margin-right: 0; }
.stage-l .orange { height: 34px; }
.sel { border: 1px solid #5b7698; display: flex; align-items: center; justify-content: flex-end; padding-right: 9px; flex: none; }
.sel-1 { height: 30px; margin-top: 13px; margin-right: 1px; }
.sel-2 { height: 30px; margin-top: 16px; margin-right: 1px; }
.rlist { height: 174px; margin-top: 13px; margin-right: 1px; border: 1px solid #5b7698; padding: 3px; display: flex; flex-direction: column; gap: 32px; flex: none; }
.rl-row { height: 24px; background: #b7b7b7; display: flex; align-items: center; flex: none; font-size: 13px; white-space: nowrap; }
.rl-t2 { display: block; width: 321px; text-align: right; color: #7b8696; }
.rl-t3 { display: block; width: 357px; text-align: right; color: #5d7191; }
.rl-star { color: #56708f; font-size: 16px; margin-left: 5px; line-height: 16px; letter-spacing: 0; font-family: "DejaVu Sans", sans-serif; }
.calltype { display: flex; align-items: center; margin-top: 17px; margin-right: 1px; padding-left: 4px; flex: none; font-size: 13px; }
.ct-l { width: 124px; }
.ct-s { flex: 1; height: 28px; }
.foot { display: flex; justify-content: flex-end; gap: 8px; margin-top: 14px; flex: none; font-size: 14px; }
.foot .btn { letter-spacing: -0.45px; }
.stage-r .foot { width: 1764px; padding-right: 5px; }
.stage-l .foot { width: 1434px; padding-right: 0; margin-top: 15px; }
.btn-clin { width: 137px; font-size: 13px; padding: 0 3px; }
.btn-full { width: 129px; font-size: 13px; padding: 0 3px; }
.stage-r .btn-full { margin-right: 539px; }
.stage-l .btn-full { margin-right: 380px; }
.btn-rev { width: 150px; }
.btn-chg { width: 133px; }
.btn-cmp { width: 91px; padding-left: 6px; }

/* dialog */
.dialog { position: absolute; width: 658px; height: 620px; background: #fff; border: 1px solid #5c80ab; display: flex; flex-direction: column; }
.dialog-l { left: 287px; top: -20px; }
.dialog-r { left: 555px; top: 157px; }
.d-head { height: 29px; background: #336195; color: #fff; font-size: 14px; display: flex; align-items: center; padding-left: 5px; flex: none; margin: 0 -1px 0 0; }
.d-box { position: relative; width: 632px; height: 510px; margin: 11px 0 0 12px; border: 1px solid #6e90b8; padding: 12px 0 0 16px; flex: none; }
.f { display: flex; position: relative; }
.f-l { width: 253px; font-size: 14px; color: #3f6a9c; flex: none; white-space: nowrap; }
.f-mail { height: 29px; align-items: center; }
.d-input { width: 350px; height: 29px; border: 1px solid #4a97e0; font-size: 16px; letter-spacing: -0.25px; color: #3f6a9c; padding: 0 0 0 2px; line-height: 24px; display: flex; }
.caret-t { width: 1px; height: 22px; background: #000; margin-top: 1px; }
.f-conf { height: 12px; margin-top: 17px; align-items: center; }
.conf { display: flex; align-items: center; gap: 11px; font-size: 14px; letter-spacing: -0.38px; color: #3f6a9c; white-space: nowrap; margin-left: 1px; }
.cb { width: 14px; height: 14px; border: 1px solid #666; flex: none; display: block; background: #fff; }
.cb-on { width: 14px; height: 13px; border-color: #3b6fd1; position: relative; }
.cb-on::after { content: ""; position: absolute; left: 4px; top: 0; width: 4px; height: 9px; border: solid #222; border-width: 0 2px 2px 0; transform: rotate(40deg); }
.cursor { position: absolute; left: 260px; top: 3px; width: 13px; height: 20px; }
.f-list { height: 200px; margin-top: 17px; }
.f-list .f-l { padding-top: 3px; }
.lbox { width: 350px; height: 200px; border: 1px solid #767676; border-radius: 2px; padding: 2px 4px 0 3px; }
.l-head { height: 33px; display: flex; align-items: center; background: linear-gradient(#fff, #f5f5f5); border-bottom: 1px solid #ddd; padding-left: 8px; margin-bottom: 1px; font-size: 14px; color: #3f6a9c; position: relative; }
.l-all { margin-left: 8px; border-left: 1px solid #e0e0e0; height: 32px; line-height: 30px; padding-left: 1px; flex: 1; }
.cb-big { width: 14px; height: 14px; }
.l-row { height: 21px; display: flex; align-items: center; padding-left: 7px; gap: 15px; font-size: 12.500px; color: #3f6a9c; }
.f-leaf { height: 199px; margin-top: 10px; }
.f-leaf .f-l { padding-top: 2px; }
.d-leaf { width: 350px; height: 199px; border: 1px solid #5c80ab; border-top-width: 2px; font-size: 14px; color: #3f6a9c; padding: 2px 0 0 2px; }
.d-foot { display: flex; justify-content: flex-end; gap: 9px; padding: 26px 12px 0 0; }
.d-ret { width: 112px; height: 28px; border-color: #336195; color: #3f6a9c; padding: 0 2px 0 6px; gap: 9px; background: #fff; letter-spacing: -0.4px; }
.d-prev { width: 10px; height: 18px; }
.d-send { width: 99px; height: 29px; padding-left: 6px; letter-spacing: -0.4px; }

/* taskbars */
.taskbar { display: flex; align-items: center; color: #fff; flex: none; position: relative; }
.tb-l { width: 1366px; height: 40px; background: linear-gradient(90deg, #4a3a28 0, #3a3128 3.500%, #26262a 45%, #2c2d30 60%, #3c3e42 100%); }
.t-start { width: 48px; display: flex; justify-content: center; }
.t-i18 { width: 17px; height: 17px; }
.t-search { width: 288px; height: 40px; background: #333; border: 1px solid #666; border-bottom-color: #444; display: flex; align-items: center; position: relative; }
.t-glass { width: 17px; height: 19px; margin-left: 11px; }
.t-stext { font-size: 15px; margin-left: 11px; letter-spacing: -0.35px; color: #e6e6e6; white-space: nowrap; }
.t-pill { margin-left: auto; margin-right: 3px; width: 72px; height: 32px; background: #606060; border-radius: 5px; display: flex; align-items: center; padding-left: 4px; font-size: 13px; color: #eee; gap: 0; letter-spacing: -0.4px; }
.t-a { width: 16px; height: 16px; margin-right: 1px; }
.t-tile { width: 49px; height: 40px; display: flex; align-items: center; justify-content: center; position: relative; flex: none; }
.t-view { width: 50px; padding-right: 4px; }
.t-i24 { width: 24px; height: 26px; }
.t-on::after { content: ""; position: absolute; left: 4px; right: 4px; bottom: 0; height: 2px; background: #76b9ed; }
.t-hot { background: #a85c24; }
.t-hot::after { content: ""; position: absolute; left: 0; right: 0; bottom: 0; height: 2px; background: #f26b0f; }
.t-badge { position: absolute; left: 29px; top: 21px; width: 13px; font-size: 11px; line-height: 14px; text-align: center; letter-spacing: 0; }
.t-tray { position: absolute; left: 948px; top: 0; height: 40px; width: 418px; display: flex; align-items: center; }
.t-sun { width: 24px; height: 28px; margin-right: 8px; }
.t-temp { font-size: 13px; width: 38px; letter-spacing: -0.4px; white-space: nowrap; }
.t-wx { font-size: 13px; width: 74px; letter-spacing: -0.4px; white-space: nowrap; }
.t-ch { width: 13px; height: 7px; margin-left: 24px; }
.t-sys { width: 16px; height: 14px; }
.t-bat { margin-left: 10px; }
.t-spk { margin-left: 8px; }
.t-wifi { margin-left: 9px; }
.t-eng { font-size: 12.500px; margin-left: 9px; width: 23px; white-space: nowrap; }
.t-clock { display: flex; flex-direction: column; align-items: center; font-size: 13px; line-height: 18px; letter-spacing: -0.3px; white-space: nowrap; }
.t-tray .t-clock { width: 64px; margin-left: 10px; }
.t-notif { position: relative; margin-left: 15px; width: 16px; height: 16px; }
.t-notif svg { width: 16px; height: 16px; }
.t-count { position: absolute; left: 8px; top: 8px; width: 16px; height: 16px; border: 1px solid #aaa; border-radius: 50%; background: #333; font-size: 11px; line-height: 14px; text-align: center; font-weight: 400; }

/* odyssey window */
.ody { position: relative; width: 1920px; height: 1080px; display: flex; flex-direction: column; background: #fff; flex: none; }
.o-title { height: 23px; display: flex; align-items: center; padding-left: 2px; color: #222; gap: 6px; flex: none; position: relative; font-size: 12.500px; }
.o-logo { width: 16px; height: 17px; margin-left: 0; }
.o-ctrl { margin-left: auto; display: flex; gap: 33px; padding-right: 14px; margin-top: -2px; }
.pt { height: 77px; border: solid #000; border-width: 6px 7px 5px 6px; display: flex; flex-direction: column; color: #000; font-family: "Liberation Sans", Arial, sans-serif; letter-spacing: 0; flex: none; }
.pt-r1 { height: 45px; display: flex; align-items: center; overflow: hidden; border-bottom: 1px solid #000; flex: none; }
.pt-name { width: 1467px; font-weight: 700; font-size: 18px; padding-left: 10px; padding-bottom: 8px; white-space: nowrap; }
.pt-meta { white-space: nowrap; font-size: 14px; padding-top: 4px; }
.pt-meta i { font-size: 13px; color: #333; }
.pt-meta .m-g { margin-left: 6px; }
.pt-r2 { flex: 1; display: flex; font-size: 12px; }
.pc { display: flex; align-items: center; padding-left: 5px; border-right: 1px solid #555; flex: none; white-space: nowrap; }
.pc-a { width: 467px; }
.pc-b { width: 474px; padding-left: 6px; }
.pc-c { width: 473px; padding-left: 6px; }
.pc-d { padding-left: 11px; border: 0; }
.widget { position: absolute; left: 1808px; top: 24px; width: 103px; height: 41px; background: #f0f0f0; border: 1px solid #ccc; border-radius: 4px; display: flex; align-items: center; padding-left: 4px; }
.w-tc { width: 32px; height: 36px; }
.w-sep { width: 1px; height: 28px; background: #bbb; margin-left: 7px; }
.w-pause { display: flex; gap: 3px; margin-left: 9px; }
.w-pause i { width: 6px; height: 16px; background: #00a9f4; display: block; }
.w-stop { width: 16px; height: 16px; background: #00a9f4; margin-left: 10px; }
.tip { position: absolute; left: 1854px; top: 68px; width: 57px; height: 39px; background: #fff; border: 1px solid #777; color: #222; display: flex; flex-direction: column; align-items: center; font-size: 12px; line-height: 15px; padding: 4px 3px 0; letter-spacing: -0.2px; }
.tip::before { content: ""; position: absolute; right: 3px; top: -7px; width: 10px; height: 10px; background: #fff; border: solid #888; border-width: 1px 1px 0 0; transform: skewY(-40deg); }
.tip-b { width: 100%; text-align: center; border-top: 1px solid #222; line-height: 16px; }
.o-body { height: 939px; display: flex; border-left: 1px solid #333; flex: none; background: #fff; }
.side { width: 130px; margin: 10px 10px 10px 10px; background: #336195; display: flex; flex-direction: column; align-items: center; padding-top: 4px; color: #fff; flex: none; }
.s-em { width: 116px; height: 29px; background: #6a00ff; color: #fff; border: 0; font-size: 14px; display: flex; align-items: center; justify-content: center; gap: 5px; flex: none; }
.s-bell { width: 17px; height: 19px; }
.s-lock { width: 112px; height: 25px; margin-top: 9px; background: #fff; border: 1px solid #c5d2e0; color: #336195; font-size: 14px; display: flex; align-items: center; justify-content: center; gap: 7px; flex: none; }
.s-pad { width: 13px; height: 19px; }
.s-brand { margin-top: auto; align-self: flex-end; margin-right: 9px; font-weight: 700; font-size: 21px; line-height: 28px; letter-spacing: -0.3px; }
.s-ver { align-self: flex-end; margin: 11px 9px 0 0; font-size: 11px; line-height: 16px; letter-spacing: -0.4px; }
.s-tele { align-self: flex-end; margin: 8px 9px 4px 0; font-size: 11.500px; line-height: 16px; letter-spacing: -0.5px; }
.view-r { flex: 1; margin-top: 5px; height: 934px; }
.tb-r { height: 41px; width: 1920px; border-top: 1px solid #111; background: linear-gradient(90deg, #4a3c2a 0, #3d3428 20%, #1f1f21 33%, #1c1d20 60%, #3c3e42 100%); }
.r-tile { width: 49px; height: 40px; display: flex; align-items: center; justify-content: center; position: relative; flex: none; }
.r-tile svg { flex: none; }
.r-on::after { content: ""; position: absolute; left: 4px; right: 4px; bottom: 0; height: 2px; background: #76b9ed; }
.r-act { background: #4a4a4a; }
.r-act::after { left: 0; right: 0; }
.r-clock { margin-left: auto; width: 70px; }
```
